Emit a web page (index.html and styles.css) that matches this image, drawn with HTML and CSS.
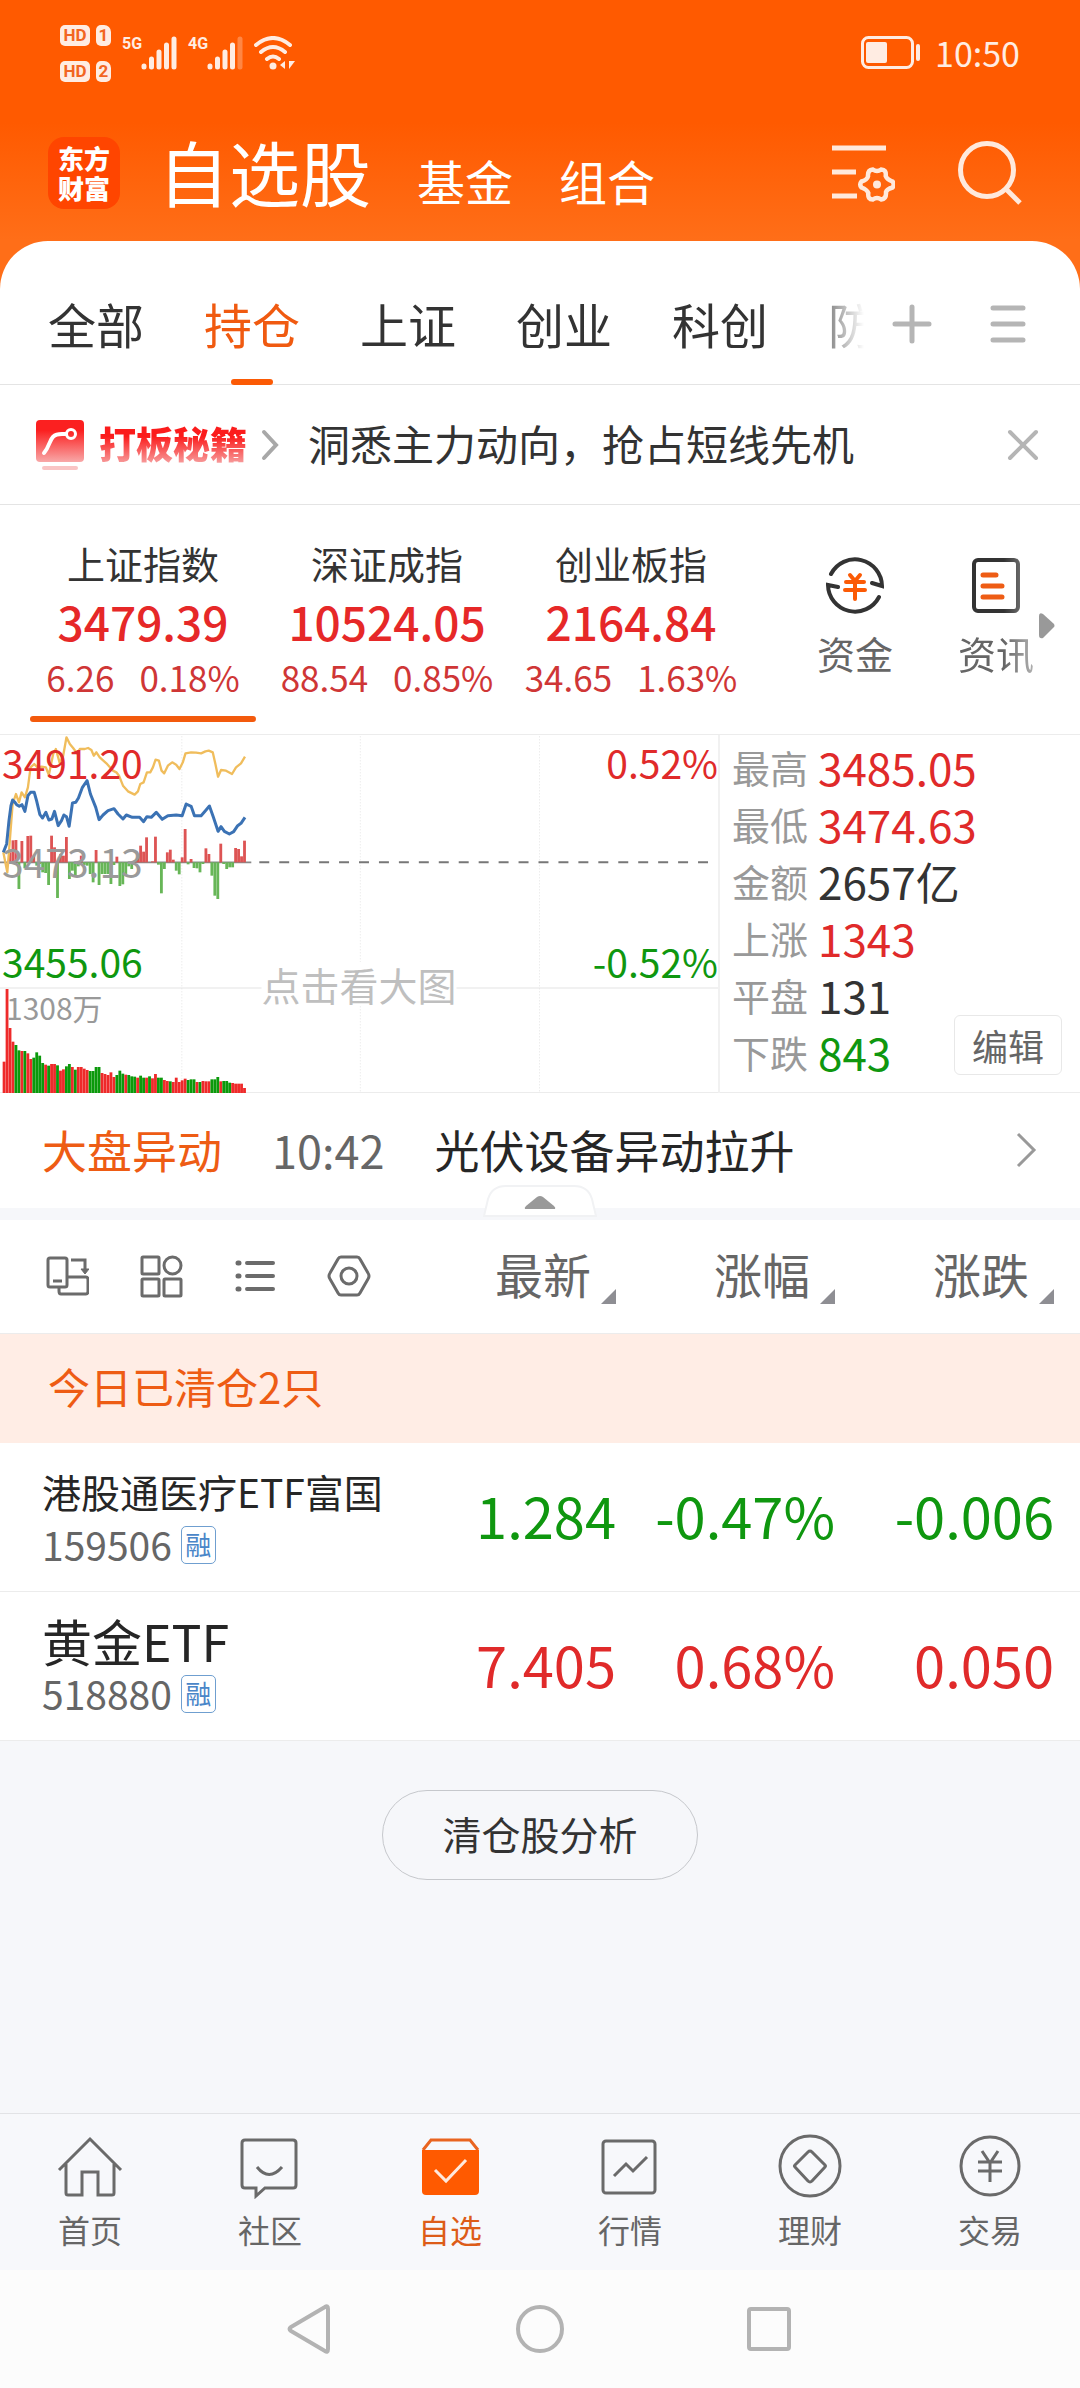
FILE: index.html
```html
<!DOCTYPE html>
<html lang="zh-CN">
<head>
<meta charset="utf-8">
<meta name="viewport" content="width=device-width, initial-scale=1">
<title>自选股</title>
<link rel="stylesheet" href="styles.css">
</head>
<body>
<header class="top">
  <div class="status">
    <div class="sims">
      <span class="hd">HD</span><span class="sim">1</span>
      <span class="hd">HD</span><span class="sim">2</span>
    </div>
    <div class="signal">
      <span class="net">5G</span>
      <svg width="36" height="34" viewBox="0 0 36 34" stroke="#ffece2" stroke-width="5" stroke-linecap="round"><path d="M3 30v1M10.500 23v8M18 16v15M25.500 9v22M33 3v28"/></svg>
    </div>
    <div class="signal">
      <span class="net">4G</span>
      <svg width="36" height="34" viewBox="0 0 36 34" stroke="#ffece2" stroke-width="5" stroke-linecap="round"><path d="M3 30v1M10.500 23v8M18 16v15M25.500 9v22"/><path d="M33 3v28" opacity=".3"/></svg>
    </div>
    <svg class="wifi" width="41" height="34" viewBox="0 0 41 34" fill="none" stroke="#ffece2" stroke-width="4" stroke-linecap="round"><path d="M2 9Q19-5 36 9M7 16Q19 6 31 16M13 23Q19 18 25 23"/><circle cx="19" cy="30" r="3.500" fill="#ffece2" stroke="none"/><path d="M31 25v8l-5-4zM35 25v8l6-8z" fill="#ffece2" stroke="none"/></svg>
    <div class="status-right">
      <svg width="60" height="34" viewBox="0 0 60 34" fill="none" stroke="#ffece2"><rect x="1.500" y="1.500" width="50" height="30" rx="6" stroke-width="3"/><rect x="5" y="6" width="21" height="21" rx="2" fill="#ffece2" stroke="none"/><path d="M57 10v13" stroke-width="4" stroke-linecap="round"/></svg>
      <time class="clock">10:50</time>
    </div>
  </div>
  <div class="titlebar">
    <div class="logo"><span>东方</span><span>财富</span></div>
    <nav class="sections">
      <a class="section section-on" href="#watch">自选股</a>
      <a class="section" href="#fund">基金</a>
      <a class="section" href="#combo">组合</a>
    </nav>
    <div class="title-actions">
      <button aria-label="设置"><svg width="64" height="64" viewBox="0 0 64 64" fill="none" stroke="#ffe9dc"><path d="M1 7h54M1 31h24M1 55h25" stroke-width="5"/><path d="M41.800 28.500Q46 31.500 50.200 28.500Q55.500 28.500 54.700 35Q56 38.500 61.500 40.500Q64 43.500 61.500 46.500Q56 48 55 51Q55.500 58 50.200 58.500Q46 55.500 41.800 58.500Q36.500 58.500 37.300 52Q36 48.500 30.500 46.500Q28 43.500 30.500 40.500Q36 39 37 35.500Q36.500 29 41.800 28.500Z" stroke-width="4.500"/><circle cx="46" cy="43.500" r="4" fill="#ffe9dc" stroke="none"/></svg></button>
      <button aria-label="搜索"><svg width="64" height="64" viewBox="0 0 64 64" fill="none" stroke="#ffe9dc" stroke-width="5"><circle cx="29" cy="29" r="26.500"/><path d="M48 48l14 14"/></svg></button>
    </div>
  </div>
</header>
<main>
  <div class="groups">
    <nav class="group-list">
      <a href="#all">全部</a>
      <a class="group-on" href="#hold">持仓</a>
      <a href="#sh">上证</a>
      <a href="#cy">创业</a>
      <a href="#kc">科创</a>
      <a href="#fy">防御</a>
    </nav>
    <div class="group-actions">
      <button aria-label="添加分组"><svg width="40" height="40" viewBox="0 0 40 40" stroke="#b5b5b5" stroke-width="5" stroke-linecap="round"><path d="M20 3v34M3 20h34"/></svg></button>
      <button aria-label="管理分组"><svg width="40" height="40" viewBox="0 0 40 40" stroke="#b5b5b5" stroke-width="5" stroke-linecap="round"><path d="M5 4h30M5 20h30M5 36h30"/></svg></button>
    </div>
  </div>

  <div class="promo">
    <svg width="50" height="50" viewBox="0 0 50 50" fill="none"><defs><linearGradient id="pg" x2="0" y2="1"><stop offset=".25" stop-color="#fb2020"/><stop offset="1" stop-color="#f8a8a8"/></linearGradient></defs><rect x="1" width="48" height="42" rx="4" fill="url(#pg)"/><path d="M9 33C17 24 13 14 27 14h4" stroke="#fff" stroke-width="4" stroke-linecap="round"/><circle cx="36" cy="14" r="4.500" stroke="#fff" stroke-width="3"/><path d="M9 48h32" stroke="#f9c4c4" stroke-width="4" stroke-linecap="round"/></svg>
    <strong class="promo-tag">打板秘籍</strong>
    <svg width="18" height="32" viewBox="0 0 18 32" fill="none" stroke="#a8a8a8" stroke-width="4" stroke-linecap="round"><path d="M3 3l12 13L3 29"/></svg>
    <a class="promo-text" href="#promo">洞悉主力动向，抢占短线先机</a>
    <button aria-label="关闭"><svg width="32" height="32" viewBox="0 0 32 32" stroke="#b5b5b5" stroke-width="4" stroke-linecap="round"><path d="M3 3l26 26M29 3L3 29"/></svg></button>
  </div>

  <section class="indices">
    <div class="index-list">
      <button class="index index-on"><span class="index-name">上证指数</span><span class="index-value">3479.39</span><span class="index-change"><span>6.26</span><span>0.18%</span></span></button>
      <button class="index"><span class="index-name">深证成指</span><span class="index-value">10524.05</span><span class="index-change"><span>88.54</span><span>0.85%</span></span></button>
      <button class="index"><span class="index-name">创业板指</span><span class="index-value">2164.84</span><span class="index-change"><span>34.65</span><span>1.63%</span></span></button>
    </div>
    <div class="shortcuts">
      <a class="shortcut" href="#money"><svg width="60" height="60" viewBox="0 0 60 60" fill="none" stroke="#333" stroke-width="4" stroke-linecap="round"><path d="M6 19A27 27 0 0 1 57 31L47 28M54 42A27 27 0 0 1 3 30L13 32"/><path d="M25 20l5 6 5-6M30 26v18M21 27h18M20 35h20" stroke="#fb5a05"/></svg>资金</a>
      <a class="shortcut shortcut-fade" href="#news"><svg width="60" height="60" viewBox="0 0 60 60" fill="none" stroke="#333" stroke-width="4" stroke-linecap="round"><rect x="8" y="5" width="44" height="51" rx="4"/><path d="M17 20h13M17 31h19M17 42h19" stroke="#ee5c14" stroke-width="5"/></svg>资讯</a>
    </div>
    <svg class="more" width="16" height="26" viewBox="0 0 16 26"><path d="M0 3Q0-1 4 1L15 11Q16 13 15 14L4 25Q0 26 0 22Z" fill="#999"/></svg>
  </section>

  <section class="market">
    <div class="chart">
      <svg class="plot" viewBox="0 0 2160 1074" preserveAspectRatio="none" fill="none">
        <path d="M0 759H2160" stroke="#ececec" stroke-width="4"/>
        <path d="M547 4V1074M1084 4V1074M1623 4V1074" stroke="#e4e4e4" stroke-width="3" stroke-dasharray="3 6"/>
        <path d="M0 382H756" stroke="#888" stroke-width="5"/>
        <path d="M780 382H2140" stroke="#777" stroke-width="6" stroke-dasharray="30 30"/>
        <g id="bars"></g>
        <g transform="translate(0 -43)" stroke-linejoin="round">
          <polyline stroke="#f0bd5c" stroke-width="7" points="10,395 22,455 28,380 38,250 48,220 57,245 65,215 75,230 84,200 92,140 103,130 112,140 125,138 138,140 147,163 160,100 168,85 180,128 190,105 200,50 210,70 220,82 232,98 240,85 255,85 265,82 275,88 282,105 290,95 300,110 320,128 340,150 350,155 358,165 370,195 385,212 405,222 415,212 422,190 432,185 442,155 452,155 460,140 468,117 478,120 486,150 494,158 505,135 518,125 530,132 540,145 550,125 558,98 575,95 590,96 605,98 618,92 628,90 640,95 648,130 656,168 665,148 680,150 698,160 710,140 725,128 737,108"/>
          <polyline stroke="#3b72b4" stroke-width="9" points="10,395 20,370 27,300 33,255 38,238 45,245 50,252 58,257 66,252 75,272 84,225 92,215 103,215 110,240 120,282 128,292 138,275 147,298 156,295 164,272 175,315 185,300 192,283 200,288 208,317 218,247 228,245 236,232 248,200 262,180 272,220 288,260 298,297 310,283 325,270 343,264 355,280 370,295 380,283 398,290 420,290 432,303 442,288 455,290 470,275 488,296 505,285 530,283 548,285 560,250 575,257 585,285 605,285 618,270 630,256 642,290 656,332 665,318 675,332 690,340 703,333 715,315 725,308 737,290"/>
        </g>
      </svg>
      <span class="tick tick-high up">3491.20</span>
      <span class="tick tick-mid">3473.13</span>
      <span class="tick tick-low down">3455.06</span>
      <span class="tick tick-high tick-right up">0.52%</span>
      <span class="tick tick-low tick-right down">-0.52%</span>
      <span class="tick tick-volume">1308万</span>
      <span class="hint">点击看大图</span>
    </div>
    <dl class="stats">
      <div><dt>最高</dt><dd class="up">3485.05</dd></div>
      <div><dt>最低</dt><dd class="up">3474.63</dd></div>
      <div><dt>金额</dt><dd>2657亿</dd></div>
      <div><dt>上涨</dt><dd class="up">1343</dd></div>
      <div><dt>平盘</dt><dd>131</dd></div>
      <div><dt>下跌</dt><dd class="down">843</dd></div>
    </dl>
    <button class="edit">编辑</button>
  </section>

  <a class="alert" href="#alert">
    <span class="alert-tag">大盘异动</span>
    <time class="alert-time">10:42</time>
    <span class="alert-text">光伏设备异动拉升</span>
    <svg width="22" height="36" viewBox="0 0 22 36" fill="none" stroke="#999" stroke-width="3"><path d="M3 2l16 16L3 34"/></svg>
  </a>
  <div class="strip">
    <button class="collapse" aria-label="收起"><svg width="114" height="32" viewBox="0 0 114 32"><path d="M1 31L5 14Q9 1 23 1H91Q105 1 109 14L113 31Z" fill="#fff" stroke="#f1f2f4" stroke-width="2"/><path d="M42 24Q41 23 43 21L54 12Q57 10 60 12L71 21Q73 23 72 24Z" fill="#999"/></svg></button>
  </div>

  <table class="watch">
    <colgroup><col><col class="col-num"><col class="col-num"><col class="col-last"></colgroup>
    <thead>
      <tr>
        <th>
          <div class="tools">
            <button aria-label="横屏"><svg width="44" height="44" viewBox="0 0 44 44" fill="none" stroke="#6b6b6b" stroke-width="3"><rect x="3" y="4" width="19" height="29" rx="2"/><path d="M8 27h9M26 6h14v11M22 23h19q2 0 2 3v11q0 3-2 3H16q-2 0-2-3v-4"/><path d="M36 15h8l-4 5z" fill="#6b6b6b" stroke-width="1"/></svg></button>
            <button aria-label="卡片"><svg width="44" height="44" viewBox="0 0 44 44" fill="none" stroke="#6b6b6b" stroke-width="3"><rect x="3" y="3" width="17" height="17" rx="1"/><circle cx="33.500" cy="11.500" r="8.500"/><rect x="3" y="25" width="17" height="17" rx="1"/><rect x="25" y="25" width="17" height="17" rx="1"/></svg></button>
            <button aria-label="列表"><svg width="44" height="44" viewBox="0 0 44 44" fill="none" stroke="#6b6b6b" stroke-width="4" stroke-linecap="round"><path d="M14 9h26M14 22h26M14 35h26"/><path d="M5 9h1M5 22h1M5 35h1" stroke-width="5"/></svg></button>
            <button aria-label="设置"><svg width="44" height="44" viewBox="0 0 44 44" fill="none" stroke="#6b6b6b" stroke-width="3"><path d="M14 3h16q2 0 3 2l8 14q2 3 0 6l-8 14q-1 2-3 2H14q-2 0-3-2L3 25q-2-3 0-6l8-14q1-2 3-2z"/><circle cx="22" cy="22" r="8"/></svg></button>
          </div>
        </th>
        <th><button class="sort">最新</button></th>
        <th><button class="sort">涨幅</button></th>
        <th><button class="sort">涨跌</button></th>
      </tr>
    </thead>
    <tbody>
      <tr class="cleared"><td colspan="4">今日已清仓2只</td></tr>
      <tr class="stock down">
        <td><div class="name name-long">港股通医疗ETF富国</div><div class="code">159506<span class="badge">融</span></div></td>
        <td>1.284</td><td>-0.47%</td><td>-0.006</td>
      </tr>
      <tr class="stock up">
        <td><div class="name">黄金ETF</div><div class="code">518880<span class="badge">融</span></div></td>
        <td>7.405</td><td>0.68%</td><td>0.050</td>
      </tr>
    </tbody>
  </table>
  <div class="after"><button class="analyse">清仓股分析</button></div>
</main>

<nav class="tabbar">
  <a href="#home"><svg width="66" height="66" viewBox="0 0 66 66" fill="none" stroke="#6a6a6a" stroke-width="3"><path d="M2 37L33 6l31 31M9 31v29q0 2 2 2h14V39h16v23h14q2 0 2-2V31"/></svg>首页</a>
  <a href="#social"><svg width="66" height="66" viewBox="0 0 66 66" fill="none" stroke="#6a6a6a" stroke-width="3"><path d="M8 7h48q3 0 3 3v42q0 3-3 3H28l-9 8v-8H8q-3 0-3-3V10q0-3 3-3z"/><path d="M20 34q12 15 25 0"/></svg>社区</a>
  <a class="tab-on" href="#watch"><svg width="66" height="66" viewBox="0 0 66 66" fill="none"><path d="M6 17L14 7h39l8 10" stroke="#e96420" stroke-width="3"/><path d="M5 17h57v41q0 4-4 4H9q-4 0-4-4z" fill="#ff5a00"/><path d="M18 37l11 11 20-21" stroke="#ffe9dc" stroke-width="3"/></svg>自选</a>
  <a href="#quotes"><svg width="66" height="66" viewBox="0 0 66 66" fill="none" stroke="#6a6a6a" stroke-width="3"><rect x="6" y="8" width="52" height="52" rx="3"/><path d="M17 43l12-12 7 7 14-14"/></svg>行情</a>
  <a href="#wealth"><svg width="66" height="66" viewBox="0 0 66 66" fill="none" stroke="#6a6a6a" stroke-width="3"><circle cx="33" cy="33" r="30"/><path d="M31 19q2-2 4 0l13 13q1 1 0 2L35 48q-2 2-4 0L18 34q-1-1 0-2z"/></svg>理财</a>
  <a href="#trade"><svg width="66" height="66" viewBox="0 0 66 66" fill="none" stroke="#6a6a6a" stroke-width="3"><circle cx="33" cy="33" r="29"/><path d="M25 18l8 12 8-12M33 30v19M21 29h24M21 38h24"/></svg>交易</a>
</nav>
<div class="sysnav">
  <button aria-label="返回"><svg width="50" height="50" viewBox="0 0 50 50" fill="none" stroke="#b3b3b3" stroke-width="4" stroke-linejoin="round"><path d="M39 3q3-2 3 2v40q0 4-3 2L5 27q-3-2 0-4z"/></svg></button>
  <button aria-label="主屏幕"><svg width="50" height="50" viewBox="0 0 50 50" fill="none" stroke="#b3b3b3" stroke-width="4"><circle cx="25" cy="25" r="22"/></svg></button>
  <button aria-label="最近任务"><svg width="50" height="50" viewBox="0 0 50 50" fill="none" stroke="#b3b3b3" stroke-width="4"><rect x="5" y="5" width="40" height="40" rx="2"/></svg></button>
</div>
<script src="chart.js"></script>
</body>
</html>
```

FILE: chart.js
```
// Bar heights in plot units, one entry per bar, left to right.
const volume = [94,312,195,154,144,128,126,126,119,102,106,122,112,90,85,82,87,87,83,67,71,80,87,78,70,78,78,73,69,66,66,78,78,60,57,54,62,48,54,67,58,55,54,50,49,46,52,46,46,50,44,57,46,46,39,36,35,33,46,33,38,43,39,41,41,33,33,36,35,35,41,41,48,35,36,36,31,30,28,28,28,15];
const side = 'RRRRGGRGRRGGGGRGRRGRRGGRGRRRRGGGGRRRRRGGGRGGGRGGRGRRGGRRGRRRRRGGGRGRRRGGGRGGGRRRRR';
const flow = [0,0,30,66,67,-80,64,-18,79,80,20,-10,-5,-30,-32,-68,80,45,-107,25,20,76,-50,-25,-40,-12,20,-8,-10,-35,-60,37,-68,-35,-35,-35,-65,-8,17,-71,-66,-35,-12,-20,5,15,50,32,75,0,3,77,-7,-93,-20,30,38,8,-25,-36,15,100,-6,10,-17,-18,-30,-5,42,25,-40,-100,-110,56,-5,-20,-15,-15,43,40,18,65];

const bars = document.getElementById('bars');
const pitch = 8.93;

function draw(x, y, height, color) {
  const rect = document.createElementNS('http://www.w3.org/2000/svg', 'rect');
  rect.setAttribute('x', x);
  rect.setAttribute('y', y);
  rect.setAttribute('width', 8.5);
  rect.setAttribute('height', height);
  rect.setAttribute('fill', color);
  bars.appendChild(rect);
}

volume.forEach((v, i) => draw(8 + i * pitch, 1074 - v, v, side[i] === 'R' ? '#ee2a2a' : '#0b990b'));
flow.forEach((v, i) => draw(8 + i * pitch, v > 0 ? 382 - v : 382, Math.abs(v), v > 0 ? '#dd5454' : '#67b657'));
```

FILE: styles.css
```css
* { box-sizing: border-box; }
body {
  margin: 0;
  min-height: 100vh;
  display: flex;
  flex-direction: column;
  background: #f6f7fa;
  color: #333;
  font-family: "Noto Sans CJK SC", "Noto Sans", sans-serif;
  line-height: 1;
}
a { color: inherit; text-decoration: none; }
button { margin: 0; padding: 0; border: 0; background: none; color: inherit; font: inherit; }
svg { display: block; flex: none; }
.up { color: #e02a2a; }
.down { color: #0f970f; }

/* header */
.top {
  background: linear-gradient(#ff5a00 122px, #ff6e18 240px);
  height: 290px;
  color: #fff;
}
.status { display: flex; align-items: flex-start; height: 122px; padding: 25px 60px 0; color: #ffece2; }
.sims { display: grid; grid-template-columns: 30px 15px; gap: 15px 6px; }
.hd, .sim {
  height: 21px;
  border-radius: 5px;
  background: #ffece2;
  color: #f26522;
  font: bold 17px/21px Roboto, sans-serif;
  text-align: center;
}
.sim { border-top-right-radius: 7px; }
.signal { display: flex; margin: 11px 0 0 11px; }
.net { width: 19px; font: bold 16px/16px Roboto, sans-serif; }
.wifi { margin: 11px 0 0 11px; }
.status-right { display: flex; gap: 14px; align-items: center; margin: 11px 0 0 auto; }
.clock { font-size: 34px; line-height: 34px; }
.titlebar { display: flex; align-items: center; padding: 14px 58px 0 48px; height: 88px; }
.logo {
  display: flex;
  flex-direction: column;
  justify-content: center;
  width: 72px;
  height: 72px;
  border-radius: 16px;
  background: #ff4500;
  font-weight: 900;
  font-size: 26px;
  line-height: 30px;
  text-align: center;
}
.sections { display: flex; align-items: baseline; gap: 46px; margin: 4px 0 0 38px; }
.section { font-size: 48px; line-height: 72px; }
.section-on { font-size: 71px; }
.title-actions { display: flex; gap: 63px; margin-left: auto; }

/* groups */
main { flex: 1; margin-top: -49px; border-radius: 48px 48px 0 0; background: #fff; display: flex; flex-direction: column; }
.groups { display: flex; height: 144px; border-bottom: 1px solid #e4e4e4; padding: 0 52px 0 48px; }
.group-list {
  display: flex;
  flex: 1;
  gap: 60px;
  height: 144px;
  overflow: hidden;
  font-size: 48px;
  line-height: 164px;
  white-space: nowrap;
  -webkit-mask-image: linear-gradient(to left, transparent, #000 60px);
  mask-image: linear-gradient(to left, transparent, #000 60px);
}
.group-on { position: relative; color: #f05a10; }
.group-on::after {
  content: "";
  position: absolute;
  left: 27px;
  bottom: 0;
  width: 42px;
  height: 6px;
  border-radius: 3px;
  background: #fb5a05;
}
.group-actions { display: flex; align-items: center; gap: 56px; margin: 23px 0 0 28px; }

/* promo */
.promo { display: flex; align-items: center; height: 120px; padding: 0 41px 0 35px; border-bottom: 1px solid #e4e4e4; }
.promo-tag {
  margin: 0 14px 4px 14px;
  font-size: 37px;
  font-weight: 900;
  line-height: 44px;
  color: transparent;
  background: linear-gradient(#fb1c1c 35%, #f79a9a 95%);
  -webkit-background-clip: text;
  background-clip: text;
}
.promo-text { flex: 1; margin: 0 0 4px 29px; font-size: 42px; line-height: 56px; }

/* indices */
.indices { display: flex; align-items: flex-start; height: 230px; padding: 35px 25px 0 21px; border-bottom: 1px solid #ececec; }
.index-list { display: flex; }
.index { position: relative; width: 244px; height: 182px; display: flex; flex-direction: column; align-items: center; }
.index-name { font-size: 38px; line-height: 46px; }
.index-value { font-size: 46px; font-weight: 500; line-height: 70px; color: #e62828; }
.index-change { display: flex; gap: 25px; font-size: 35px; line-height: 42px; color: #cf3636; white-space: nowrap; }
.index-on::after {
  content: "";
  position: absolute;
  left: 9px;
  right: 9px;
  bottom: 0;
  height: 6px;
  border-radius: 3px;
  background: #f35a0d;
}
.shortcuts { display: flex; gap: 65px; margin: 15px 0 0 64px; }
.shortcut { display: flex; flex-direction: column; align-items: center; gap: 14px; color: #666; font-size: 38px; line-height: 48px; }
.shortcut-fade { -webkit-mask-image: linear-gradient(to left, rgba(0, 0, 0, .5), #000 30px); mask-image: linear-gradient(to left, rgba(0, 0, 0, .5), #000 30px); }
.more { margin: 73px 0 0 auto; }

/* chart and figures */
.market { position: relative; display: grid; grid-template-columns: 2fr 1fr; height: 358px; border-bottom: 1px solid #ececec; }
.chart { position: relative; height: 358px; border-right: 2px solid #f1f1f1; }
.plot { width: 100%; height: 100%; }
.tick { position: absolute; left: 2px; font-size: 39px; line-height: 40px; }
.tick-right { left: auto; right: 0; }
.tick-high { top: 7px; }
.tick-mid { top: 106px; color: #9a9a9a; }
.tick-low { top: 206px; }
.tick-volume { top: 252px; left: 6px; font-size: 30px; color: #999; }
.hint { position: absolute; top: 227px; left: 50%; transform: translateX(-50%); background: #fff; font-size: 39px; line-height: 44px; color: #bfbfbf; white-space: nowrap; }
.stats { margin: 0; padding: 3px 0 0 12px; }
.stats div { display: flex; align-items: center; gap: 10px; height: 57px; }
.stats dt { font-size: 38px; color: #999; }
.stats dd { margin: 0; font-size: 44px; }
.edit {
  position: absolute;
  right: 18px;
  bottom: 17px;
  width: 108px;
  height: 60px;
  border: 1px solid #e8e8e8;
  border-radius: 6px;
  background: #fff;
  color: #666;
  font-size: 36px;
  line-height: 54px;
}

/* alert */
.alert { display: flex; align-items: center; height: 115px; padding: 0 43px 2px 42px; font-size: 45px; line-height: 60px; }
.alert-tag { color: #ee5c14; }
.alert-time { margin: 0 50px; color: #666; }
.alert-text { flex: 1; color: #262626; }
.strip { position: relative; height: 12px; background: #f6f7fa; }
.collapse { position: absolute; left: 50%; bottom: 3px; transform: translateX(-50%); }

/* watch list */
.watch { width: 100%; border-collapse: separate; border-spacing: 0; table-layout: fixed; text-align: right; }
.col-num { width: 219px; }
.col-last { width: 245px; }
.watch th, .watch td { padding: 0; font-weight: 400; }
.watch th:last-child, .stock td:last-child { padding-right: 26px; }
.watch th { height: 114px; padding-bottom: 2px; border-bottom: 1px solid #ececec; }
.tools { display: flex; gap: 50px; padding-left: 45px; }
.sort { position: relative; padding: 0 25px 6px 0; color: #666; font-size: 48px; line-height: 56px; }
.sort::after {
  content: "";
  position: absolute;
  right: 0;
  bottom: 3px;
  border-left: 15px solid transparent;
  border-bottom: 15px solid #8e8e93;
}
.watch .cleared td { height: 109px; padding: 0 0 6px 48px; background: #ffede5; color: #ee5c14; font-size: 42px; text-align: left; }
.watch .stock td { height: 149px; padding-bottom: 4px; border-bottom: 1px solid #ececec; font-size: 56px; white-space: nowrap; }
.watch .stock td:first-child { padding: 0 0 3px 42px; text-align: left; }
.stock .name { height: 58px; font-size: 50px; line-height: 52px; color: #262626; }
.stock .name-long { font-size: 39px; }
.code { display: flex; align-items: center; gap: 9px; height: 44px; font-size: 39px; color: #666; }
.badge {
  width: 35px;
  height: 38px;
  border: 1px solid #6f9fd0;
  border-radius: 5px;
  color: #4a86c8;
  font-size: 26px;
  line-height: 34px;
  text-align: center;
}
.after { flex: 1; background: #f6f7fa; padding: 49px 0; text-align: center; }
.analyse { padding: 0 59px 4px; height: 90px; border: 1px solid #c6c8cc; border-radius: 45px; font-size: 39px; }

/* bottom bars */
.tabbar { display: grid; grid-template-columns: repeat(6, 1fr); height: 157px; border-top: 1px solid #e2e3e6; background: #f7f8fb; }
.tabbar a { display: flex; flex-direction: column; align-items: center; padding-top: 19px; gap: 8px; color: #666; font-size: 32px; line-height: 44px; }
.tabbar .tab-on { color: #dd5c18; }
.sysnav { display: flex; justify-content: center; align-items: center; gap: 179px; height: 118px; background: #fcfcfc; }
```
